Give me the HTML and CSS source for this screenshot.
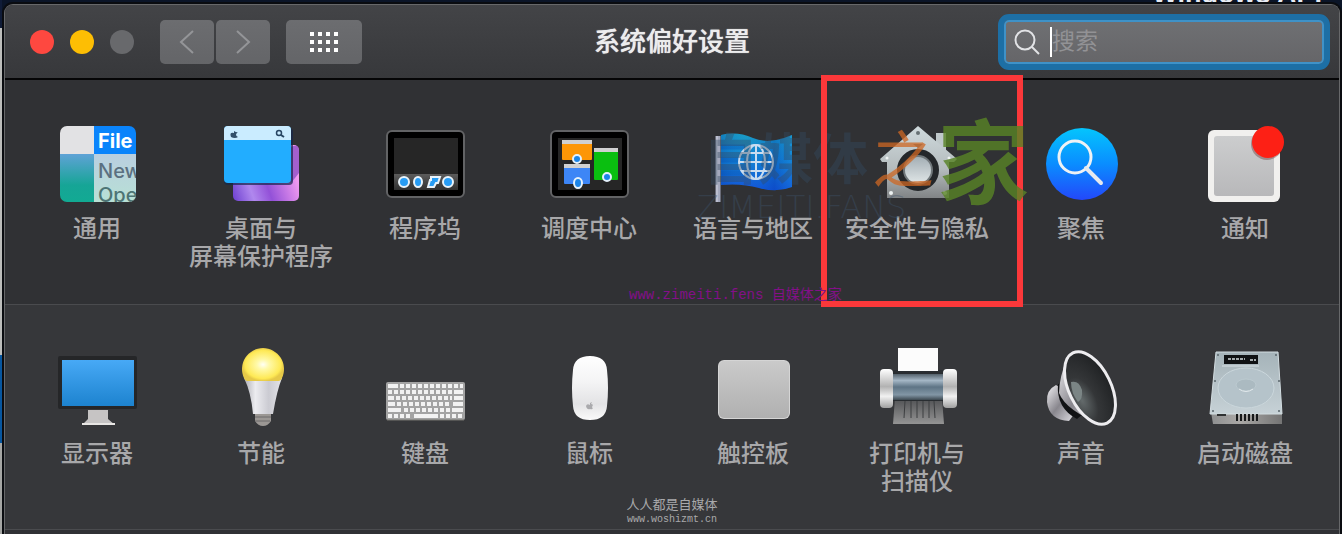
FILE: index.html
```html
<!DOCTYPE html>
<html lang="zh-CN">
<head>
  <meta charset="UTF-8">
  <meta name="viewport" content="width=device-width, initial-scale=1.0">
  <title>系统偏好设置</title>
  <link rel="stylesheet" href="styles.css">
</head>
<body>
  <div class="behind">Windows API</div>
  <main class="window">
    <header class="titlebar">
      <div class="controls">
        <div class="lights">
          <button class="light close" aria-label="关闭"></button>
          <button class="light minimize" aria-label="最小化"></button>
          <button class="light zoom" aria-label="缩放"></button>
        </div>
        <div class="nav">
          <button class="tool" aria-label="后退">
            <svg width="16" height="26" viewBox="0 0 16 26"><path d="M14 2L2 13L14 24"/></svg>
          </button>
          <button class="tool" aria-label="前进">
            <svg width="16" height="26" viewBox="0 0 16 26"><path d="M2 2L14 13L2 24"/></svg>
          </button>
        </div>
        <button class="tool all" aria-label="显示全部">
          <svg width="30" height="22" viewBox="0 0 30 22"><path d="M1 3H30M1 11H30M1 19H30"/></svg>
        </button>
      </div>
      <h1>系统偏好设置</h1>
      <label class="search">
        <svg width="26" height="26" viewBox="0 0 26 26"><circle cx="11" cy="11" r="9.5"/><path d="M18 18L25 25"/></svg>
        <span class="caret"></span>
        <input type="text" placeholder="搜索" aria-label="搜索">
      </label>
    </header>

    <section class="row">
      <button class="pref">
        <svg class="icon" viewBox="0 0 80 80">
          <defs>
            <linearGradient id="teal" x2="0" y2="1"><stop stop-color="#5fa2d6"/><stop offset=".65" stop-color="#16a596"/><stop offset="1" stop-color="#12aa93"/></linearGradient>
            <linearGradient id="pale" x2="0" y2="1"><stop stop-color="#b9cfe0"/><stop offset="1" stop-color="#b8e0d5"/></linearGradient>
            <clipPath id="tile"><rect x="3" y="3" width="76" height="76" rx="7"/></clipPath>
          </defs>
          <g clip-path="url(#tile)">
            <rect x="3" y="3" width="34" height="28" fill="#e2e2e4"/>
            <rect x="37" y="3" width="42" height="28" fill="#0a84fb"/>
            <rect x="3" y="31" width="34" height="48" fill="url(#teal)"/>
            <rect x="37" y="31" width="42" height="48" fill="url(#pale)"/>
            <text x="41" y="25" class="menu-text bold" fill="#fff">File</text>
            <text x="41" y="55" class="menu-text" fill="#5b7080">New</text>
            <text x="41" y="79" class="menu-text" fill="#4d7474">Open</text>
          </g>
        </svg>
        <span>通用</span>
      </button>
      <button class="pref">
        <svg class="icon" viewBox="0 0 80 80">
          <defs>
            <linearGradient id="wall" x1="0" y1="1" x2="1" y2=".7"><stop stop-color="#6c3fd0"/><stop offset=".3" stop-color="#b088ee"/><stop offset=".55" stop-color="#9351d8"/><stop offset="1" stop-color="#f19af0"/></linearGradient>
          </defs>
          <rect x="12" y="22" width="66" height="56" rx="5" fill="url(#wall)"/>
          <path d="M70 24Q78 20 78 28V50L70 60Z" fill="#7038b8" opacity=".6"/>
          <rect x="3" y="5" width="69" height="57" rx="4" fill="#16264a" opacity=".7"/>
          <rect x="3" y="3" width="67" height="57" rx="4" fill="#22adff"/>
          <path d="M3 17V7Q3 3 7 3H66Q70 3 70 7V17Z" fill="#caecff"/>
          <path d="M13 8Q16 10 17 9Q13 12 17 14Q14 16 10 14Q8 9 13 10Z" fill="#33506a"/>
          <circle cx="58" cy="10" r="2.5" fill="none" stroke="#274663" stroke-width="1.5"/>
          <path d="M60 12L63 14" stroke="#274663" stroke-width="2"/>
        </svg>
        <span>桌面与<br>屏幕保护程序</span>
      </button>
      <button class="pref">
        <svg class="icon" viewBox="0 0 80 80">
          <defs>
            <linearGradient id="dock" x2="0" y2="1"><stop stop-color="#5c5c5c"/><stop offset="1" stop-color="#303030"/></linearGradient>
          </defs>
          <rect x="2" y="8" width="77" height="66" rx="5" fill="#000" stroke="#626365" stroke-width="2"/>
          <rect x="9" y="15" width="64" height="52" fill="#262626"/>
          <rect x="9" y="51" width="64" height="16" fill="url(#dock)"/>
          <g fill="#279cf4" stroke="#e9f3fa" stroke-width="2">
            <circle cx="19" cy="59" r="5"/>
            <ellipse cx="33" cy="59" rx="4" ry="5"/>
            <path d="M46 54H55L53 60H51L49 64H43L45 57H46Z"/>
            <circle cx="63" cy="59" r="5"/>
          </g>
        </svg>
        <span>程序坞</span>
      </button>
      <button class="pref">
        <svg class="icon" viewBox="0 0 80 80">
          <rect x="2" y="8" width="77" height="66" rx="5" fill="#000" stroke="#626365" stroke-width="2"/>
          <rect x="9" y="15" width="64" height="52" fill="#262626"/>
          <rect x="13" y="17" width="30" height="20" rx="1" fill="#fd9606"/>
          <rect x="15" y="41" width="26" height="20" rx="1" fill="#3d86f6"/>
          <rect x="45" y="25" width="24" height="32" rx="1" fill="#0abf10"/>
          <path d="M13 19H43M15 43H41M45 27H69" stroke="#d0d0d0" stroke-width="4"/>
          <g fill="#1c85e8" stroke="#e4f1fc" stroke-width="2">
            <circle cx="28" cy="36" r="4"/>
            <ellipse cx="29" cy="60" rx="4" ry="5"/>
            <circle cx="58" cy="54" r="4"/>
          </g>
        </svg>
        <span>调度中心</span>
      </button>
      <button class="pref">
        <svg class="icon" viewBox="0 0 80 80">
          <defs>
            <linearGradient id="flag" x2="0" y2="1"><stop stop-color="#1a9cc4"/><stop offset=".5" stop-color="#147ed2"/><stop offset="1" stop-color="#1452d8"/></linearGradient>
            <linearGradient id="fold"><stop stop-color="#003fa8" stop-opacity=".3"/><stop offset=".35" stop-color="#0a8cf0" stop-opacity="0"/><stop offset=".75" stop-color="#0040b0" stop-opacity=".35"/><stop offset="1" stop-color="#1690e8" stop-opacity=".3"/></linearGradient>
          </defs>
          <path d="M8 12Q24 8 40 15T79 12V64Q64 70 46 65T8 62Z" fill="url(#flag)"/>
          <path d="M8 24H32M8 37H26M8 50H32" stroke="#0d5ebc" stroke-width="5" opacity=".5"/>
          <path d="M8 12Q24 8 40 15T79 12V64Q64 70 46 65T8 62Z" fill="url(#fold)"/>
          <path d="M5 13V79" stroke="#a4a9bd" stroke-width="5"/>
          <path d="M4 13V79" stroke="#d1d3df" stroke-width="1"/>
          <g fill="none" stroke="#c9dcf0" stroke-width="2">
            <circle cx="43" cy="39" r="17"/>
            <ellipse cx="43" cy="39" rx="9" ry="17"/>
            <path d="M43 22V56M26 39H60M29 30H57M29 48H57"/>
          </g>
        </svg>
        <span>语言与地区</span>
      </button>
      <button class="pref marked">
        <svg class="icon" viewBox="0 0 80 80">
          <defs>
            <linearGradient id="steel" x2="0" y2="1"><stop stop-color="#cfdadd"/><stop offset=".6" stop-color="#b4bbbd"/><stop offset="1" stop-color="#818486"/></linearGradient>
            <linearGradient id="knob" x2="0" y2="1"><stop stop-color="#a4afb5"/><stop offset="1" stop-color="#dfe5e6"/></linearGradient>
          </defs>
          <path d="M59 10H69V30H59Z" fill="#bfc8ca"/>
          <path d="M41 3L80 36L77 39H72V75H10V39H5L3 36Z" fill="url(#steel)"/>
          <circle cx="41" cy="10" r="2" fill="#677174"/>
          <path d="M36 21H46L41 25Z" fill="#717b7e"/>
          <circle cx="41" cy="47" r="18" fill="#70777a" stroke="#24272a" stroke-width="6"/>
          <circle cx="41" cy="47" r="13" fill="url(#knob)"/>
          <g fill="#eef2f2"><circle cx="10" cy="35" r="1.5"/><circle cx="72" cy="35" r="1.5"/><circle cx="14" cy="70" r="2"/><circle cx="68" cy="70" r="2"/></g>
        </svg>
        <span>安全性与隐私</span>
      </button>
      <button class="pref">
        <svg class="icon" viewBox="0 0 80 80">
          <defs>
            <linearGradient id="blue" x2="0" y2="1"><stop stop-color="#04c5fd"/><stop offset=".5" stop-color="#0a8dff"/><stop offset="1" stop-color="#2348fa"/></linearGradient>
          </defs>
          <circle cx="41" cy="41" r="36" fill="url(#blue)"/>
          <circle cx="34" cy="34" r="16" fill="none" stroke="#eef2f5" stroke-width="3"/>
          <path d="M45 45L60 60" stroke="#e6e9ef" stroke-width="4" stroke-linecap="round"/>
        </svg>
        <span>聚焦</span>
      </button>
      <button class="pref">
        <svg class="icon" viewBox="0 0 80 80">
          <defs>
            <linearGradient id="note" x2="0" y2="1"><stop stop-color="#cccdce"/><stop offset="1" stop-color="#b8b8ba"/></linearGradient>
          </defs>
          <rect x="3" y="7" width="72" height="72" rx="6" fill="#f1f0ee"/>
          <rect x="9" y="13" width="60" height="60" rx="3" fill="url(#note)"/>
          <circle cx="62" cy="21" r="16" fill="#5a1a1a" opacity=".35"/>
          <circle cx="63" cy="19" r="16" fill="#fd2015"/>
        </svg>
        <span>通知</span>
      </button>
    </section>

    <section class="row alt">
      <button class="pref">
        <svg class="icon" viewBox="0 0 80 80">
          <defs>
            <linearGradient id="screen" x2="0" y2="1"><stop stop-color="#47a9f6"/><stop offset="1" stop-color="#1d83cf"/></linearGradient>
          </defs>
          <rect x="1" y="8" width="79" height="53" rx="2" fill="#252628"/>
          <rect x="5" y="12" width="72" height="46" fill="url(#screen)"/>
          <path d="M31 62H51V71L58 77H25L31 71Z" fill="#c6c4c4"/>
          <path d="M25 76H58" stroke="#e8e6e4" stroke-width="2"/>
        </svg>
        <span>显示器</span>
      </button>
      <button class="pref">
        <svg class="icon" viewBox="0 0 80 80">
          <defs>
            <radialGradient id="glow"><stop stop-color="#fffff4"/><stop offset=".3" stop-color="#fff9a8"/><stop offset=".85" stop-color="#fee955"/><stop offset="1" stop-color="#e6c948"/></radialGradient>
            <linearGradient id="cone"><stop stop-color="#adadb4"/><stop offset=".3" stop-color="#ececf0"/><stop offset=".65" stop-color="#cbcbd2"/><stop offset="1" stop-color="#e4e4e8"/></linearGradient>
          </defs>
          <path d="M34 65H50V73Q47 78 42 78T34 73Z" fill="#9b9794"/>
          <path d="M34 69H50M34 73H49" stroke="#6d6a6b" stroke-width="1"/>
          <path d="M23 30H61Q56 42 52 66H32Q30 44 23 30Z" fill="url(#cone)"/>
          <path d="M23 30A21 21 0 1 1 61 30Q60 33 58 33H26Q24 33 23 30Z" fill="url(#glow)"/>
        </svg>
        <span>节能</span>
      </button>
      <button class="pref">
        <svg class="icon" viewBox="0 0 80 80">
          <rect x="1" y="34" width="79" height="38" rx="2" fill="#a3a3a3"/>
          <g stroke="#f2f2f2" stroke-width="4" fill="none">
            <path d="M3 38H13"/><path d="M15 38H78" stroke-dasharray="4 2"/>
            <path d="M3 44H68" stroke-dasharray="4 2"/><path d="M69 44H78"/>
            <path d="M3 50H9"/><path d="M11 50H67" stroke-dasharray="4 2"/><path d="M69 50H78"/>
            <path d="M3 56H10"/><path d="M12 56H66" stroke-dasharray="4 2"/><path d="M68 56H78"/>
            <path d="M3 62H16"/><path d="M19 62H65" stroke-dasharray="4 2"/><path d="M67 62H78"/>
            <path d="M3 68H27" stroke-dasharray="4 2"/><path d="M29 68H53"/><path d="M55 68H78" stroke-dasharray="4 2"/>
          </g>
          <path d="M2 72H79" stroke="#74746e" stroke-width="1"/>
        </svg>
        <span>键盘</span>
      </button>
      <button class="pref">
        <svg class="icon" viewBox="0 0 80 80">
          <defs>
            <linearGradient id="mouse" x2="0" y2="1"><stop stop-color="#fff"/><stop offset=".4" stop-color="#f4f4f5"/><stop offset=".75" stop-color="#e3e3e5"/><stop offset="1" stop-color="#fafafa"/></linearGradient>
          </defs>
          <path d="M41 8Q57 8 58 22Q60 40 58 58Q57 72 41 72T24 58Q22 40 24 22Q25 8 41 8Z" fill="url(#mouse)"/>
          <path d="M41 55L43 54L42 56Q45 56 43 59Q45 62 41 61Q38 62 37 58Q38 55 41 57Z" fill="#aaaaad"/>
        </svg>
        <span>鼠标</span>
      </button>
      <button class="pref">
        <svg class="icon" viewBox="0 0 80 80">
          <defs>
            <linearGradient id="pad" x2="0" y2="1"><stop stop-color="#cacaca"/><stop offset="1" stop-color="#b0b0b0"/></linearGradient>
          </defs>
          <rect x="5" y="12" width="72" height="59" rx="6" fill="#d5d5d5"/>
          <rect x="6" y="13" width="70" height="57" rx="5" fill="url(#pad)"/>
        </svg>
        <span>触控板</span>
      </button>
      <button class="pref">
        <svg class="icon" viewBox="0 0 80 80">
          <defs>
            <linearGradient id="drum" x2="0" y2="1"><stop stop-color="#54616b"/><stop offset=".25" stop-color="#a4b6c5"/><stop offset=".5" stop-color="#5e7485"/><stop offset=".8" stop-color="#8296a5"/><stop offset="1" stop-color="#3d4850"/></linearGradient>
            <linearGradient id="cap" x2="0" y2="1"><stop stop-color="#fff"/><stop offset=".45" stop-color="#b2b2b2"/><stop offset=".7" stop-color="#f1f1f1"/><stop offset="1" stop-color="#a0a0a0"/></linearGradient>
            <linearGradient id="tray" x2="0" y2="1"><stop stop-color="#505153"/><stop offset="1" stop-color="#949494"/></linearGradient>
          </defs>
          <path d="M18 50H65L67 76H16Z" fill="url(#tray)"/>
          <path d="M28 53L27 70M34 53V70M40 53V70M46 53V70M52 53V70M57 53L58 70" stroke="#3c3e40" stroke-width="1"/>
          <rect x="15" y="22" width="52" height="31" fill="#292d31"/>
          <rect x="15" y="26" width="52" height="26" fill="url(#drum)"/>
          <rect x="21" y="0" width="40" height="23" fill="#fcfcfc"/>
          <rect x="3" y="21" width="13" height="39" rx="4" fill="url(#cap)"/>
          <rect x="66" y="21" width="14" height="39" rx="4" fill="url(#cap)"/>
        </svg>
        <span>打印机与<br>扫描仪</span>
      </button>
      <button class="pref">
        <svg class="icon" viewBox="0 0 80 80">
          <defs>
            <linearGradient id="horn" x2="1" y2="1"><stop stop-color="#f3f2f5"/><stop offset=".5" stop-color="#88868d"/><stop offset="1" stop-color="#e2e0e5"/></linearGradient>
            <radialGradient id="inside" cx=".2" cy=".6" r=".8"><stop stop-color="#646b6c"/><stop offset=".4" stop-color="#343638"/><stop offset="1" stop-color="#202224"/></radialGradient>
          </defs>
          <path d="M15 37Q5 42 6 54Q8 72 28 73L34 65L20 40Z" fill="url(#horn)"/>
          <path d="M17 36Q15 60 36 71L42 66L24 34Z" fill="#101113"/>
          <path d="M27 7Q18 30 18 45Q25 63 62 77L50 20Z" fill="url(#horn)"/>
          <ellipse cx="49" cy="40" rx="21" ry="39" transform="rotate(-26 49 40)" fill="url(#inside)" stroke="#edecef" stroke-width="3"/>
          <path d="M30 34Q38 32 41 42Q42 51 37 54Q30 45 30 34Z" fill="#7b8585"/>
        </svg>
        <span>声音</span>
      </button>
      <button class="pref">
        <svg class="icon" viewBox="0 0 80 80">
          <defs>
            <linearGradient id="disk" x2="0" y2="1"><stop stop-color="#a5b3b9"/><stop offset="1" stop-color="#c6d1d6"/></linearGradient>
            <linearGradient id="front"><stop stop-color="#8e8f90"/><stop offset=".4" stop-color="#aaa8a6"/><stop offset="1" stop-color="#747474"/></linearGradient>
          </defs>
          <path d="M6 64H77V76H8Z" fill="url(#front)"/>
          <path d="M11 4H73L77 66H5Z" fill="url(#disk)" stroke="#d3dde1" stroke-width="1"/>
          <rect x="19" y="7" width="34" height="9" fill="#101214"/>
          <path d="M23 11H40M45 12H51" stroke="#a5abad" stroke-width="2" stroke-dasharray="3 1"/>
          <path d="M17 18H54" stroke="#d8e0e4" stroke-width="1"/>
          <ellipse cx="41" cy="40" rx="28" ry="20" fill="#b5c3ca" stroke="#cbd7dc" stroke-width="1"/>
          <ellipse cx="41" cy="37" rx="10" ry="6" fill="#abbac1" stroke="#bccad0" stroke-width="1"/>
          <path d="M34 41Q41 46 48 41" stroke="#e2e9ec" fill="none"/>
          <path d="M32 66V73M36 66V73M40 66V73M44 66V73M48 66V73M52 66V73" stroke="#17191a" stroke-width="2"/>
          <path d="M12 67H21" stroke="#303233" stroke-width="2"/>
          <g fill="#59656a"><circle cx="13" cy="7" r="1"/><circle cx="71" cy="7" r="1"/><circle cx="10" cy="33" r="1"/><circle cx="74" cy="33" r="1"/><circle cx="8" cy="63" r="1"/><circle cx="74" cy="63" r="1"/></g>
        </svg>
        <span>启动磁盘</span>
      </button>
    </section>

    <!-- site stamps printed over the panel -->
    <div class="stamp media">自媒体</div>
    <div class="stamp zhi">之</div>
    <div class="stamp domain">ZIMEITI.FANS</div>
    <div class="stamp jia">家</div>
    <div class="stamp fens">www.zimeiti.fens 自媒体之家</div>
    <div class="stamp footer">
      <div>人人都是自媒体</div>
      <div class="url">www.woshizmt.cn</div>
    </div>
  </main>
</body>
</html>
```
FILE: styles.css
```css
* {
  box-sizing: border-box;
}
body {
  margin: 0;
  padding: 4px 2px 0 4px;
  min-height: 100vh;
  display: flex;
  flex-direction: column;
  position: relative;
  overflow: hidden;
  font-family: "Liberation Sans", "Noto Sans CJK SC", sans-serif;
  background-color: #0b1528;
  background-image: linear-gradient(#101c38 28px, #bcbdbb 28px, #bcbdbb 355px, #07569f 355px, #07569f 443px, #a5a6a4 443px);
  background-size: 2px 100%;
  background-repeat: no-repeat;
}
button {
  border: 0;
  padding: 0;
  font: inherit;
  color: inherit;
  background: none;
}

.behind {
  position: absolute;
  top: -20px;
  right: 20px;
  color: #e8ecf4;
  font-size: 27px;
  font-weight: bold;
  line-height: 28px;
}
.window {
  flex: 1;
  position: relative;
  border: 1px solid #67686a;
  border-bottom: 0;
  border-radius: 9px 9px 0 0;
  background: #303135;
  box-shadow: 0 0 0 2px #0a0c10;
}

/* title bar */
.titlebar {
  height: 75px;
  display: grid;
  grid-template-columns: 1fr auto 1fr;
  align-items: center;
  padding: 0 9px;
  border-bottom: 2px solid #050506;
  border-radius: 8px 8px 0 0;
  background: linear-gradient(#434447, #37383b);
}
.controls, .lights, .nav {
  display: flex;
  align-items: center;
}
.lights {
  gap: 16px;
  margin-left: 16px;
  margin-right: 26px;
}
.light {
  width: 24px;
  height: 24px;
  border-radius: 50%;
}
.close {
  background: #fe4840;
}
.minimize {
  background: #fdbe04;
}
.zoom {
  background: #68696c;
}
.nav {
  gap: 2px;
  margin-right: 16px;
}
.tool {
  width: 54px;
  height: 44px;
  display: flex;
  align-items: center;
  justify-content: center;
  border-radius: 5px;
  background: linear-gradient(#6c6d70, #646568);
}
.tool path {
  fill: none;
  stroke: #949598;
  stroke-width: 2;
}
.all {
  width: 76px;
}
.all path {
  stroke: #fff;
  stroke-width: 4;
  stroke-dasharray: 4 4;
}
h1 {
  margin: 0;
  color: #ececed;
  font-size: 26px;
  font-weight: 500;
  line-height: 36px;
  text-shadow: 0 0 1px #ececed;
}
.search {
  justify-self: end;
  width: 332px;
  height: 56px;
  display: flex;
  align-items: center;
  padding: 0 8px 0 10px;
  border: 6px solid #1d6fa5;
  border-radius: 11px;
  background: linear-gradient(#6f7073, #656568);
  box-shadow: inset 0 0 0 2px #3f92c8;
}
.search svg {
  flex: none;
  fill: none;
  stroke: #e2e3e6;
  stroke-width: 2;
}
.caret {
  width: 2px;
  height: 30px;
  margin-left: 10px;
  background: #fff;
}
.search input {
  flex: 1;
  min-width: 0;
  padding: 0;
  border: 0;
  outline: 0;
  color: #fff;
  font: inherit;
  font-size: 23px;
  background: none;
}
.search input::placeholder {
  color: #929295;
}

/* preference panes */
.row {
  display: grid;
  grid-template-columns: repeat(8, 1fr);
  padding: 43px 12px 33px 10px;
  border-bottom: 1px solid #4a4b4e;
  background: #303134;
}
.alt {
  background: #36373a;
}
.pref {
  display: flex;
  flex-direction: column;
  align-items: center;
  gap: 12px;
  position: relative;
  color: #a8a8aa;
  font-size: 24px;
  font-weight: 500;
  line-height: 28px;
  white-space: nowrap;
}
.icon {
  width: 80px;
  height: 80px;
}
.menu-text {
  font-family: "Inter", sans-serif;
  font-size: 20px;
}
.bold {
  font-weight: bold;
}
.marked::after {
  content: "";
  position: absolute;
  top: -48px;
  right: -24px;
  bottom: -36px;
  left: -14px;
  border: 6px solid #fb383a;
  z-index: 1;
}

/* stamps */
.stamp {
  position: absolute;
  pointer-events: none;
  white-space: nowrap;
}
.media {
  top: 122px;
  left: 698px;
  color: rgba(52, 74, 98, 0.4);
  font-size: 55px;
  font-weight: bold;
  line-height: 66px;
}
.zhi {
  top: 124px;
  left: 867px;
  color: rgba(205, 103, 35, 0.75);
  font-size: 62px;
  line-height: 66px;
}
.domain {
  top: 186px;
  left: 692px;
  color: rgba(62, 84, 108, 0.4);
  font-family: "DejaVu Sans Light", "DejaVu Sans", sans-serif;
  font-size: 32px;
  font-weight: 200;
  line-height: 32px;
}
.jia {
  top: 110px;
  left: 932px;
  z-index: 2;
  color: rgba(88, 130, 38, 0.82);
  font-size: 92px;
  font-weight: bold;
  line-height: 100px;
}
.fens {
  top: 281px;
  left: 624px;
  z-index: 2;
  color: #831088;
  font-family: "Liberation Mono", "Noto Sans CJK SC", monospace;
  font-size: 14px;
  line-height: 18px;
}
.footer {
  top: 492px;
  left: 50%;
  transform: translateX(-50%);
  color: #a9a9ab;
  font-size: 13px;
  line-height: 16px;
  text-align: center;
}
.url {
  font-family: "Liberation Mono", monospace;
  font-size: 10px;
  line-height: 14px;
}
```
